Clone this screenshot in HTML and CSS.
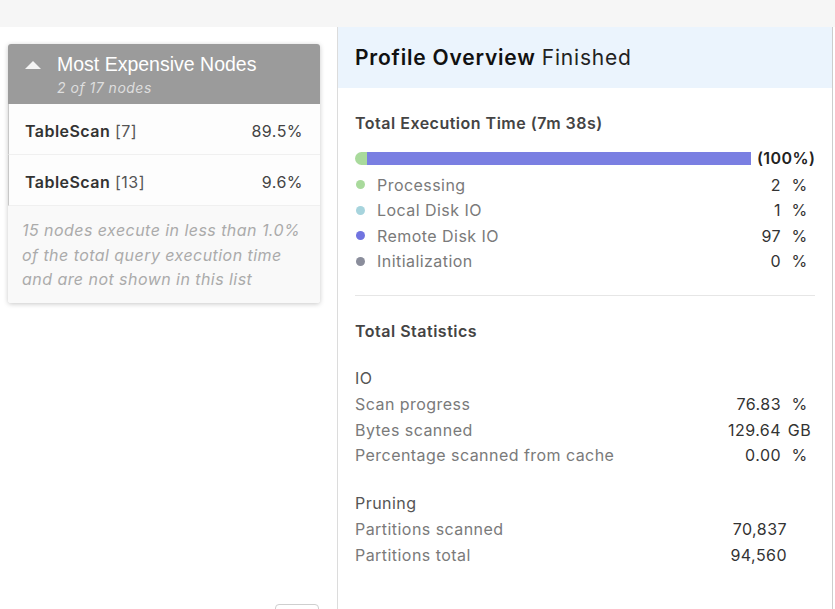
FILE: index.html
```html
<!DOCTYPE html>
<html>
<head>
<meta charset="utf-8">
<link rel="stylesheet" href="styles.css">
</head>
<body>
<div class="topbar"></div>
<div class="main">
  <div class="left">
    <div class="card">
      <div class="card-head">
        <span class="tri"></span>
        <div class="head-text">
          <div class="head-title">Most Expensive Nodes</div>
          <div class="head-sub">2 of 17 nodes</div>
        </div>
      </div>
      <div class="node-row">
        <span><b>TableScan</b> [7]</span>
        <span class="pct">89.5%</span>
      </div>
      <div class="node-row">
        <span><b>TableScan</b> [13]</span>
        <span class="pct">9.6%</span>
      </div>
      <div class="card-foot">15 nodes execute in less than 1.0% of the total query execution time and are not shown in this list</div>
    </div>
    <div class="mini-btn"></div>
  </div>
  <div class="right">
    <div class="r-head"><b>Profile Overview</b> Finished</div>
    <div class="r-body">
      <div class="sec-title first">Total Execution Time (7m 38s)</div>
      <div class="bar-row">
        <div class="bar">
          <span class="seg seg-proc" style="width:3%"></span>
          <span class="seg seg-remote" style="width:97%"></span>
        </div>
        <span class="bar-label">(100%)</span>
      </div>
      <div class="legend">
        <div class="lrow"><span class="dot d-proc"></span><span class="lname">Processing</span><span class="num">2</span><span class="unit">%</span></div>
        <div class="lrow"><span class="dot d-local"></span><span class="lname">Local Disk IO</span><span class="num">1</span><span class="unit">%</span></div>
        <div class="lrow"><span class="dot d-remote"></span><span class="lname">Remote Disk IO</span><span class="num">97</span><span class="unit">%</span></div>
        <div class="lrow"><span class="dot d-init"></span><span class="lname">Initialization</span><span class="num">0</span><span class="unit">%</span></div>
      </div>
      <div class="divider"></div>
      <div class="sec-title stats">Total Statistics</div>
      <div class="group">
        <div class="gname">IO</div>
        <div class="srow"><span class="sname">Scan progress</span><span class="num">76.83</span><span class="unit">%</span></div>
        <div class="srow"><span class="sname">Bytes scanned</span><span class="num">129.64</span><span class="unit">GB</span></div>
        <div class="srow"><span class="sname">Percentage scanned from cache</span><span class="num">0.00</span><span class="unit">%</span></div>
      </div>
      <div class="group">
        <div class="gname">Pruning</div>
        <div class="srow"><span class="sname">Partitions scanned</span><span class="num plain">70,837</span></div>
        <div class="srow"><span class="sname">Partitions total</span><span class="num plain">94,560</span></div>
      </div>
    </div>
  </div>
</div>
</body>
</html>
```
FILE: styles.css
```css
* { box-sizing: border-box; }
html, body { margin: 0; padding: 0; }
body {
  width: 835px;
  height: 609px;
  overflow: hidden;
  background: #ffffff;
  font-family: Inter, "Noto Sans", sans-serif;
  color: #333;
}
.topbar { height: 27px; background: #f6f6f6; }
.main { display: flex; height: 582px; }
.left {
  width: 338px;
  border-right: 1px solid #dcdcdc;
  padding: 17px 0 0 8px;
  display: flex;
  flex-direction: column;
}
.card {
  width: 312px;
  background: #fdfdfd;
  border-radius: 3px;
  box-shadow: 0 1px 5px rgba(0,0,0,0.22);
  overflow: hidden;
  flex-shrink: 0;
}
.card-head {
  height: 60px;
  background: #9b9b9b;
  display: flex;
  align-items: flex-start;
  padding: 9px 0 0 17px;
}
.tri {
  width: 0; height: 0;
  border-left: 8px solid transparent;
  border-right: 8px solid transparent;
  border-bottom: 8px solid #f4f4f4;
  margin-top: 8px;
  margin-right: 16px;
}
.head-title {
  font-family: "Liberation Sans", Arial, sans-serif;
  font-size: 19.5px;
  line-height: 23px;
  color: #ffffff;
}
.head-sub {
  font-size: 14px;
  line-height: 22px;
  letter-spacing: 0.5px;
  font-style: italic;
  color: #dedede;
  padding-top: 1px;
}
.node-row {
  height: 51px;
  display: flex;
  justify-content: space-between;
  align-items: center;
  padding: 3px 17px 0 16px;
  font-size: 16px;
  letter-spacing: 0.45px;
  color: #555;
  background: #fdfdfd;
  border-left: 1px solid #c8c8c8;
  border-bottom: 1px solid #f0f0f0;
}
.node-row b { font-weight: 600; color: #333; }
.pct { color: #444; }
.card-foot {
  background: #f9f9f9;
  height: 97px;
  padding: 12px 12px 0 14px;
  font-size: 16px;
  letter-spacing: 0.45px;
  line-height: 24.5px;
  font-style: italic;
  color: #ababab;
}
.mini-btn {
  margin-top: 301px;
  margin-left: 267px;
  width: 44px;
  height: 20px;
  border: 1px solid #cfcfcf;
  border-radius: 4px;
  background: #fff;
  flex-shrink: 0;
}
.right {
  width: 495px;
  border-right: 1px solid #cdcdcd;
}
.r-head {
  height: 61px;
  background: #ebf4fd;
  padding-left: 17px;
  display: flex;
  align-items: center;
  font-size: 21px;
  letter-spacing: 0.8px;
  color: #222;
  gap: 6px;
}
.r-head b { font-weight: 600; color: #111; }
.r-body { padding: 0 17px 0 17px; }
.sec-title {
  font-size: 16px;
  letter-spacing: 0.5px;
  font-weight: 600;
  line-height: 20px;
  color: #444;
}
.sec-title.first { margin-top: 25px; }
.bar-row {
  display: flex;
  align-items: center;
  margin-top: 15px;
  height: 20px;
}
.bar {
  flex: 1;
  height: 13px;
  display: flex;
  border-radius: 7px 0 0 7px;
  overflow: hidden;
}
.seg { display: block; height: 100%; }
.seg-proc { background: #a9da9c; }
.seg-remote { background: #7a7fe2; }
.bar-label {
  width: 64px;
  padding-left: 6px;
  font-size: 16px;
  letter-spacing: 0.4px;
  font-weight: 600;
  color: #222;
}
.legend { margin-top: 4px; }
.lrow, .srow {
  display: flex;
  align-items: center;
  height: 25.5px;
  font-size: 16px;
  letter-spacing: 0.45px;
}
.dot {
  width: 9px; height: 9px;
  border-radius: 50%;
  margin-left: 1px;
  margin-right: 12px;
}
.d-proc { background: #a9da9c; }
.d-local { background: #a7d4dd; }
.d-remote { background: #7174e0; }
.d-init { background: #8a8d9b; }
.lname, .sname { flex: 1; color: #7a7a7a; }
.num { color: #333; text-align: right; margin-right: 3px; }
.num.plain { margin-right: 28px; }
.unit {
  width: 31px;
  text-align: center;
  color: #333;
}
.divider {
  height: 1px;
  background: #e6e6e6;
  margin-top: 21px;
}
.sec-title.stats { margin-top: 25px; }
.group { margin-top: 25px; }
.gname {
  font-size: 16px;
  letter-spacing: 0.45px;
  line-height: 25.5px;
  color: #555;
}
.group + .group { margin-top: 23px; }
```
